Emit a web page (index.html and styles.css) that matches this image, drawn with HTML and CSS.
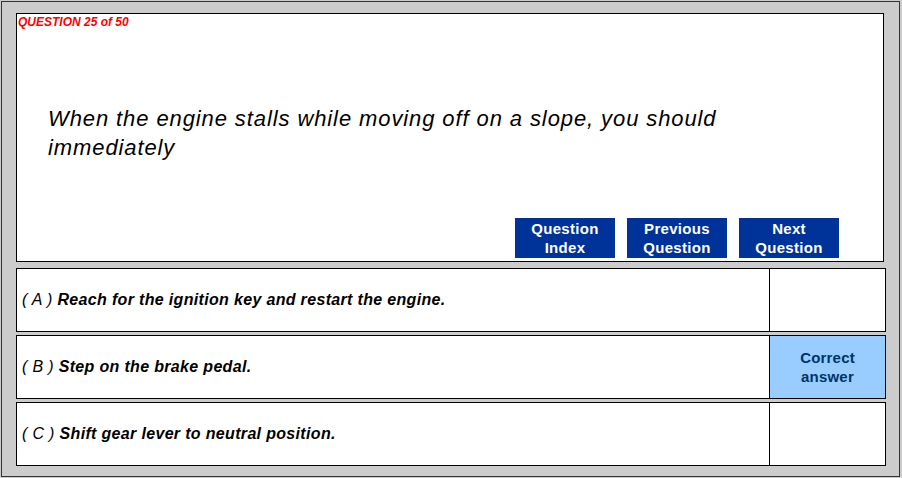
FILE: index.html
```html
<!DOCTYPE html>
<html lang="en">
<head>
    <meta charset="UTF-8">
    <title>Question 25 of 50</title>
    <link rel="stylesheet" href="styles.css">
</head>
<body>
    <div class="frame">
        <div class="question-panel">
            <div class="counter">QUESTION 25 of 50</div>
            <p class="question-text">When the engine stalls while moving off on a slope, you should immediately</p>
            <div class="nav">
                <button class="nav-btn">Question<br>Index</button>
                <button class="nav-btn">Previous<br>Question</button>
                <button class="nav-btn">Next<br>Question</button>
            </div>
        </div>
        <div class="answers">
            <div class="answer">
                <div class="answer-text"><span class="letter">( A )</span> Reach for the ignition key and restart the engine.</div>
                <div class="answer-mark"></div>
            </div>
            <div class="answer">
                <div class="answer-text"><span class="letter">( B )</span> Step on the brake pedal.</div>
                <div class="answer-mark correct">Correct<br>answer</div>
            </div>
            <div class="answer">
                <div class="answer-text"><span class="letter">( C )</span> Shift gear lever to neutral position.</div>
                <div class="answer-mark"></div>
            </div>
        </div>
    </div>
</body>
</html>
```

FILE: styles.css
```css
:root {
    --frame-bg: #cccccc;
    --line: #000000;
    --nav-blue: #003399;
    --correct-bg: #99ccff;
    --correct-text: #003366;
    --font-family: 'Liberation Sans', Arial, sans-serif;
}
html, body {
    margin: 0;
    padding: 0;
    background-color: var(--frame-bg);
}
body {
    padding: 1px;
    font-family: var(--font-family);
    color: #000;
}
.frame {
    box-sizing: border-box;
    width: 899px;
    height: 476px;
    border: 1px solid #333;
    background-color: var(--frame-bg);
    padding: 11px 12px 0 14px;
}
.question-panel {
    box-sizing: border-box;
    width: 868px;
    height: 249px;
    border: 1px solid var(--line);
    background-color: #fff;
    display: flex;
    flex-direction: column;
    padding: 0 0 3px 0;
}
.counter {
    color: #ff0000;
    font-size: 12px;
    font-weight: bold;
    font-style: italic;
    padding: 1px 0 0 1px;
    line-height: 14px;
}
.question-text {
    margin: 75px 0 0 31px;
    width: 760px;
    font-size: 22px;
    font-style: italic;
    line-height: 29px;
    letter-spacing: 0.9px;
}
.nav {
    margin-top: auto;
    display: flex;
    justify-content: flex-end;
    gap: 12px;
    padding-right: 44px;
}
.nav-btn {
    width: 100px;
    height: 40px;
    border: none;
    border-radius: 0;
    background-color: var(--nav-blue);
    color: #fff;
    font-family: var(--font-family);
    font-size: 15px;
    font-weight: bold;
    line-height: 19px;
    letter-spacing: 0.3px;
    padding: 0;
}
.answers {
    margin-top: 6px;
    display: flex;
    flex-direction: column;
    gap: 3px;
}
.answer {
    box-sizing: border-box;
    width: 870px;
    height: 64px;
    border: 1px solid var(--line);
    background-color: #fff;
    display: flex;
}
.answer-text {
    flex: 1;
    display: flex;
    align-items: center;
    padding-left: 5px;
    font-size: 16px;
    font-weight: bold;
    font-style: italic;
    letter-spacing: 0.33px;
    white-space: pre;
}
.letter {
    font-weight: normal;
}
.answer-mark {
    box-sizing: border-box;
    width: 116px;
    border-left: 1px solid var(--line);
    display: flex;
    align-items: center;
    justify-content: center;
    text-align: center;
    font-size: 15px;
    font-weight: bold;
    line-height: 19px;
    letter-spacing: 0.2px;
}
.answer-mark.correct {
    background-color: var(--correct-bg);
    color: var(--correct-text);
}
```
